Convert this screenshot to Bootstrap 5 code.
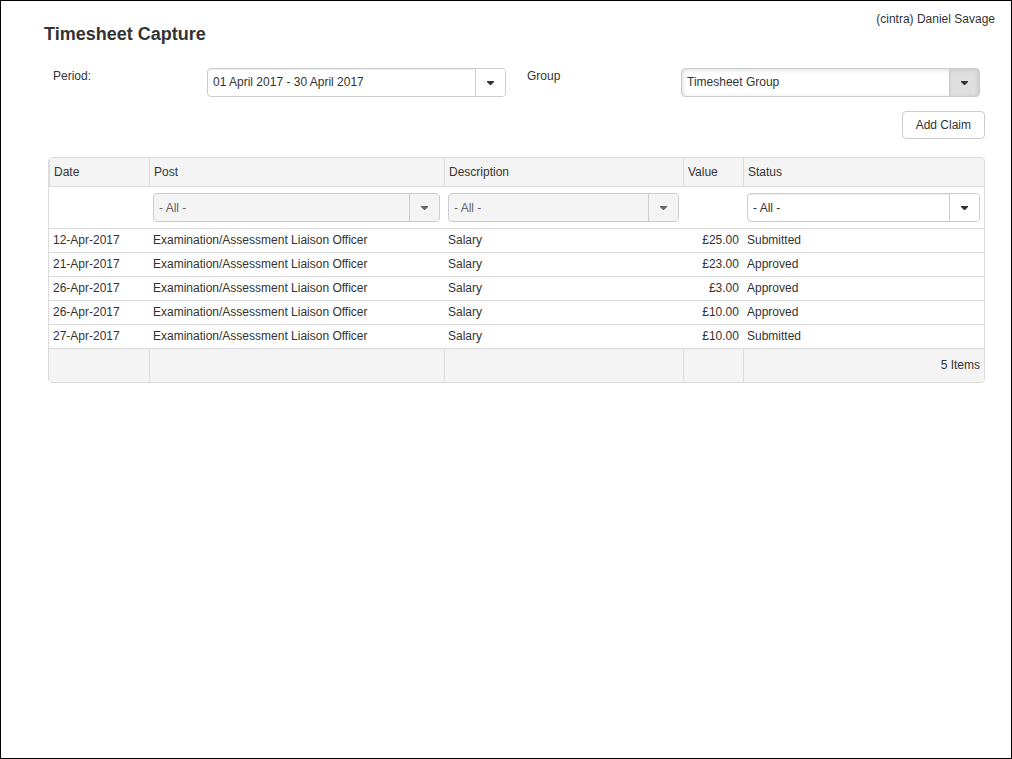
<!DOCTYPE html>
<html lang="en">
<head>
<meta charset="utf-8">
<meta name="viewport" content="width=device-width, initial-scale=1">
<title>Timesheet Capture</title>
<link href="https://cdn.jsdelivr.net/npm/bootstrap@5.3.0/dist/css/bootstrap.min.css" rel="stylesheet">
<style>
  body { font-family: "Liberation Sans", Arial, sans-serif; font-size: 12px; line-height: 18px; color: #333; background: #fff; border: 1px solid #000; }
  .page-title { font-size: 18px; line-height: 26px; font-weight: 700; padding-left: 43px; }
  .user-name { padding: 9px 16px 0 0; }
  .filters { display: grid; grid-template-columns: 1fr 1fr; column-gap: 21px; padding: 0 31px 0 52px; margin-top: 21px; }
  .field-label { flex: 0 0 154px; line-height: 16px; }
  .actions { padding: 14px 26px 0 0; }
  .btn-claim { --bs-btn-font-size: 12px; --bs-btn-line-height: 18px; --bs-btn-padding-x: 13px; --bs-btn-padding-y: 4px; --bs-btn-color: #333; --bs-btn-bg: #fff; --bs-btn-border-color: #ccc; --bs-btn-border-radius: 4px; --bs-btn-hover-color: #333; --bs-btn-hover-bg: #ebebeb; --bs-btn-hover-border-color: #bbb; }

  .combo { position: relative; color: #333; }
  .combo .form-select { height: 29px; padding: 0 36px 2px 5px; font-size: 12px; line-height: 18px; color: inherit; border: 1px solid #ccc; border-radius: 4px; background: #fff; box-shadow: inset 0 1px 1px rgba(0,0,0,.075); }
  .combo .form-select:disabled { background: #f4f4f4; color: #666; opacity: 1; box-shadow: none; }
  .combo-arrow { position: absolute; top: 1px; right: 1px; bottom: 1px; width: 30px; border-left: 1px solid #ccc; border-radius: 0 3px 3px 0; background: #fff; pointer-events: none; }
  .combo-off .combo-arrow { background: #f4f4f4; color: #666; }
  .combo-open .combo-arrow { background: #dfdfdf; box-shadow: inset -1px 1px 4px rgba(0,0,0,.12); }
  .combo-open .form-select { box-shadow: inset 1px 1px 4px rgba(0,0,0,.15); }
  .grid-combo .form-select { padding-bottom: 0; }

  .grid-frame { margin: 18px 26px 0 47px; border: 1px solid #dbdbdb; border-radius: 4px; overflow: hidden; }
  .claims { width: 100%; table-layout: fixed; border-collapse: separate; border-spacing: 0; }
  .claims th, .claims td { padding: 0 4px; border: 0 solid #dbdbdb; }
  .claims thead th { height: 29px; background: #f4f4f4; border-left-width: 1px; border-bottom-width: 1px; font-weight: 400; }
  .claims .filter-cells td { padding-top: 6px; padding-bottom: 6px; border-bottom-width: 1px; }
  .claims tbody td { height: 24px; padding-bottom: 1px; border-bottom-width: 1px; }
  .claims tfoot td { height: 33px; padding-bottom: 2px; background: #f4f4f4; border-left-width: 1px; }
  .claims tfoot td:first-child { border-left-width: 0; }
  .col-date { width: 100px; }
  .col-post { width: 31.55%; }
  .col-desc { width: 25.56%; }
  .col-value { width: 60px; }
</style>
</head>
<body class="min-vh-100">
  <header class="d-flex justify-content-between">
    <h1 class="page-title mb-0 pt-3 mt-1">Timesheet Capture</h1>
    <div class="user-name">(cintra) Daniel Savage</div>
  </header>
  <main>
    <form class="filters">
      <div class="d-flex">
        <label class="field-label" for="period">Period:</label>
        <div class="combo flex-grow-1">
          <select class="form-select" id="period"><option>01 April 2017 - 30 April 2017</option></select>
          <span class="combo-arrow d-flex align-items-center justify-content-center"><svg width="7" height="4" viewBox="0 0 7 4" fill="currentColor"><path d="M0 0h7v1L4 4H3L0 1z"/></svg></span>
        </div>
      </div>
      <div class="d-flex">
        <label class="field-label" for="group">Group</label>
        <div class="combo combo-open flex-grow-1">
          <select class="form-select" id="group"><option>Timesheet Group</option></select>
          <span class="combo-arrow d-flex align-items-center justify-content-center"><svg width="7" height="4" viewBox="0 0 7 4" fill="currentColor"><path d="M0 0h7v1L4 4H3L0 1z"/></svg></span>
        </div>
      </div>
    </form>
    <div class="actions d-flex justify-content-end">
      <button type="button" class="btn btn-claim">Add Claim</button>
    </div>
    <div class="grid-frame">
      <table class="claims">
        <colgroup><col class="col-date"><col class="col-post"><col class="col-desc"><col class="col-value"><col></colgroup>
        <thead>
          <tr><th scope="col">Date</th><th scope="col">Post</th><th scope="col">Description</th><th scope="col">Value</th><th scope="col">Status</th></tr>
          <tr class="filter-cells">
            <td></td>
            <td><div class="combo combo-off grid-combo"><select class="form-select" aria-label="Post" disabled><option>- All -</option></select><span class="combo-arrow d-flex align-items-center justify-content-center"><svg width="7" height="4" viewBox="0 0 7 4" fill="currentColor"><path d="M0 0h7v1L4 4H3L0 1z"/></svg></span></div></td>
            <td><div class="combo combo-off grid-combo"><select class="form-select" aria-label="Description" disabled><option>- All -</option></select><span class="combo-arrow d-flex align-items-center justify-content-center"><svg width="7" height="4" viewBox="0 0 7 4" fill="currentColor"><path d="M0 0h7v1L4 4H3L0 1z"/></svg></span></div></td>
            <td></td>
            <td><div class="combo grid-combo"><select class="form-select" aria-label="Status"><option>- All -</option></select><span class="combo-arrow d-flex align-items-center justify-content-center"><svg width="7" height="4" viewBox="0 0 7 4" fill="currentColor"><path d="M0 0h7v1L4 4H3L0 1z"/></svg></span></div></td>
          </tr>
        </thead>
        <tbody>
          <tr><td>12-Apr-2017</td><td>Examination/Assessment Liaison Officer</td><td>Salary</td><td class="text-end">£25.00</td><td>Submitted</td></tr>
          <tr><td>21-Apr-2017</td><td>Examination/Assessment Liaison Officer</td><td>Salary</td><td class="text-end">£23.00</td><td>Approved</td></tr>
          <tr><td>26-Apr-2017</td><td>Examination/Assessment Liaison Officer</td><td>Salary</td><td class="text-end">£3.00</td><td>Approved</td></tr>
          <tr><td>26-Apr-2017</td><td>Examination/Assessment Liaison Officer</td><td>Salary</td><td class="text-end">£10.00</td><td>Approved</td></tr>
          <tr><td>27-Apr-2017</td><td>Examination/Assessment Liaison Officer</td><td>Salary</td><td class="text-end">£10.00</td><td>Submitted</td></tr>
        </tbody>
        <tfoot>
          <tr><td></td><td></td><td></td><td></td><td class="text-end">5 Items</td></tr>
        </tfoot>
      </table>
    </div>
  </main>
<script src="https://cdn.jsdelivr.net/npm/bootstrap@5.3.0/dist/js/bootstrap.bundle.min.js"></script>
</body>
</html>
